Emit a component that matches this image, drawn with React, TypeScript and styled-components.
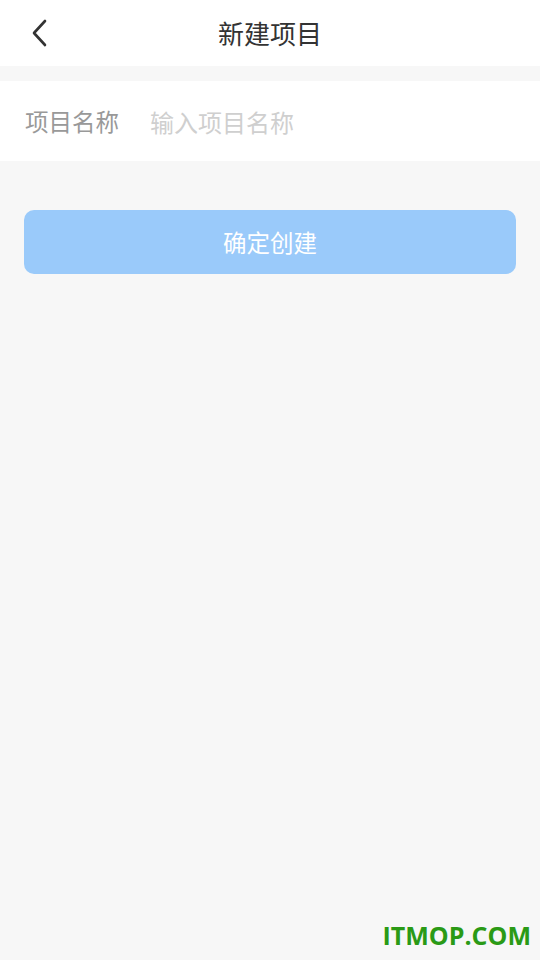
import React from "react";
import styled, { createGlobalStyle } from "styled-components";

const GlobalStyle = createGlobalStyle`
  html, body {
    margin: 0;
    padding: 0;
    background: #f7f7f7;
  }
  body {
    font-family: "Noto Sans CJK SC", "Noto Sans", sans-serif;
  }
`;

const ScPage = styled.div`
  width: 540px;
  height: 960px;
  display: flex;
  flex-direction: column;
  background: #f7f7f7;
  position: relative;
  overflow: hidden;
`;

const ScHeader = styled.header`
  height: 66px;
  background: #fff;
  display: flex;
  align-items: center;
  justify-content: center;
  position: relative;
`;

const ScBack = styled.button`
  position: absolute;
  left: 22px;
  top: 15px;
  width: 36px;
  height: 36px;
  padding: 0;
  border: none;
  background: none;
  display: flex;
  align-items: center;
  justify-content: center;
`;

const ScTitle = styled.h1`
  margin: 0;
  font-size: 26px;
  font-weight: 400;
  color: #333;
  line-height: 1;
`;

const ScField = styled.label`
  margin-top: 15px;
  height: 80px;
  background: #fff;
  display: flex;
  align-items: center;
  padding: 0 25px;
  gap: 31px;
`;

const ScLabel = styled.span`
  font-size: 23.5px;
  color: #999;
  white-space: nowrap;
`;

const ScInput = styled.input`
  flex: 1;
  border: none;
  outline: none;
  background: transparent;
  font-family: inherit;
  font-size: 24px;
  color: #333;
  padding: 0;

  &::placeholder {
    color: #cfcfcf;
  }
`;

const ScSubmit = styled.button`
  margin: 49px 24px 0;
  height: 64px;
  border: none;
  border-radius: 10px;
  background: #9acafa;
  color: #fff;
  font-family: inherit;
  font-size: 23.5px;
  display: flex;
  align-items: center;
  justify-content: center;
`;

const ScWatermark = styled.div`
  position: absolute;
  right: 9px;
  bottom: 8px;
  font-family: "Open Sans", "Liberation Sans", sans-serif;
  font-weight: 700;
  font-size: 25px;
  color: #2a9a16;
`;

const ChevronLeft = () => (
  <svg width="18" height="28" viewBox="0 0 18 28" fill="none">
    <path d="M14 2 L3 14 L14 26" stroke="#333" strokeWidth="2.6" strokeLinecap="round" strokeLinejoin="round" />
  </svg>
);

const App = () => (
  <>
    <GlobalStyle />
    <ScPage>
      <ScHeader>
        <ScBack aria-label="返回">
          <ChevronLeft />
        </ScBack>
        <ScTitle>新建项目</ScTitle>
      </ScHeader>
      <ScField>
        <ScLabel>项目名称</ScLabel>
        <ScInput placeholder="输入项目名称" />
      </ScField>
      <ScSubmit>确定创建</ScSubmit>
      <ScWatermark>ITMOP.COM</ScWatermark>
    </ScPage>
  </>
);

export default App;
